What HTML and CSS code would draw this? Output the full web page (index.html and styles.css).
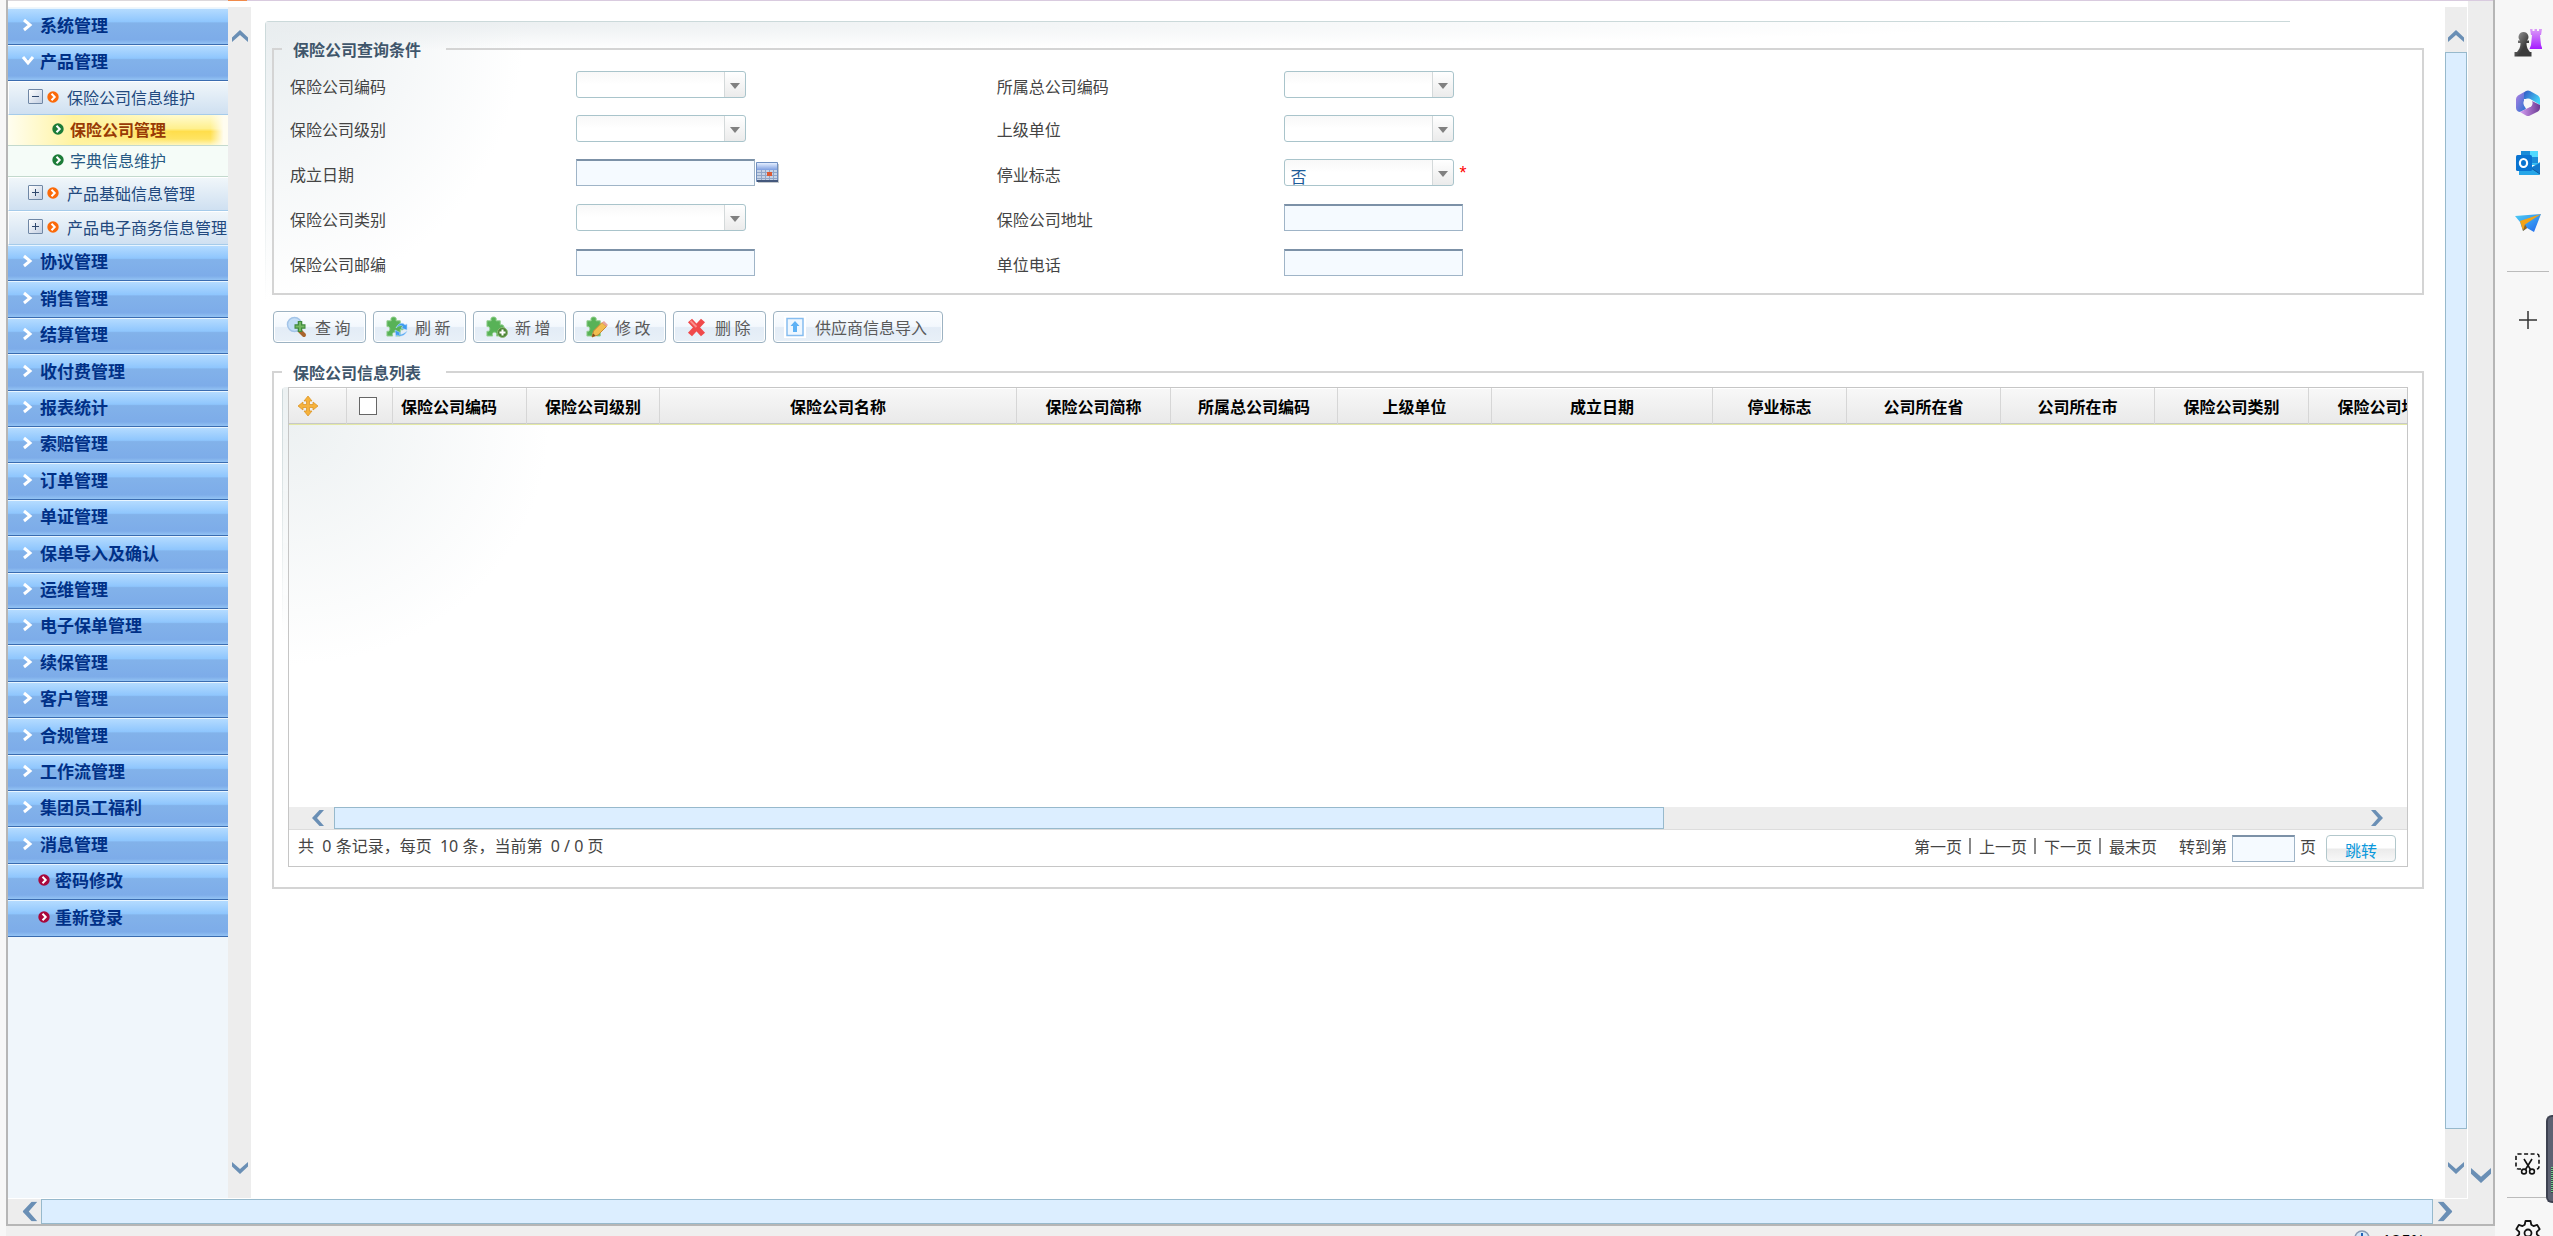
FILE: index.html
```html
<!DOCTYPE html>
<html lang="zh-CN">
<head>
<meta charset="utf-8">
<title>保险公司管理</title>
<link rel="stylesheet" href="styles.css">
</head>
<body>
<svg class="defs" aria-hidden="true">
  <symbol id="chev" viewBox="0 0 16 12"><path d="M0 12V7.500L8 0l8 7.500V12L8 5z" fill="#6a8fb5"/></symbol>
  <symbol id="dot" viewBox="0 0 12 12"><circle cx="6" cy="6" r="5.700" fill="currentColor"/><path d="M4.500 2.800L7.700 6 4.500 9.200" fill="none" stroke="#fff" stroke-width="2"/></symbol>
  <symbol id="arrow" viewBox="0 0 12 14"><path d="M2 2l6 5-6 5" fill="none" stroke="#fff" stroke-width="3"/></symbol>
  <symbol id="puzzle" viewBox="0 0 20 22"><path d="M1 5h4.500C4.500 2 6 1 8 1s3.500 1 2.500 4H15v4.500c2-1 4 0 4 2.500s-2 3-4 2V21h-4c.8-3-.5-4-2-4s-3 1-2 4H1v-5c2 .6 3-.6 3-2.500S3 11 1 11z" fill="#58b257" stroke="#8fcf8c"/></symbol>
  <symbol id="tri" viewBox="0 0 10 6"><path d="M0 0h10L5 6z" fill="#808080"/></symbol>
</svg>
<div class="browser">
  <div class="frame-wrap">
    <div class="frame">
      <div class="topline"><i></i><b></b><u></u></div>
      <div class="panes">
        <nav class="nav">
          <ul class="menu">
            <li class="top open"><a href="#"><svg><use href="#arrow"/></svg>系统管理</a></li>
            <li class="top down"><a href="#"><svg><use href="#arrow"/></svg>产品管理</a></li>
            <li class="sub"><a href="#"><span class="box minus"></span><svg><use href="#dot"/></svg>保险公司信息维护</a></li>
            <li class="leaf current"><a href="#"><svg><use href="#dot"/></svg>保险公司管理</a></li>
            <li class="leaf"><a href="#"><svg><use href="#dot"/></svg>字典信息维护</a></li>
            <li class="sub"><a href="#"><span class="box plus"></span><svg><use href="#dot"/></svg>产品基础信息管理</a></li>
            <li class="sub"><a href="#"><span class="box plus"></span><svg><use href="#dot"/></svg>产品电子商务信息管理</a></li>
          </ul>
          <ul class="menu rest">
            <li class="top"><a href="#"><svg><use href="#arrow"/></svg>协议管理</a></li>
            <li class="top"><a href="#"><svg><use href="#arrow"/></svg>销售管理</a></li>
            <li class="top"><a href="#"><svg><use href="#arrow"/></svg>结算管理</a></li>
            <li class="top"><a href="#"><svg><use href="#arrow"/></svg>收付费管理</a></li>
            <li class="top"><a href="#"><svg><use href="#arrow"/></svg>报表统计</a></li>
            <li class="top"><a href="#"><svg><use href="#arrow"/></svg>索赔管理</a></li>
            <li class="top"><a href="#"><svg><use href="#arrow"/></svg>订单管理</a></li>
            <li class="top"><a href="#"><svg><use href="#arrow"/></svg>单证管理</a></li>
            <li class="top"><a href="#"><svg><use href="#arrow"/></svg>保单导入及确认</a></li>
            <li class="top"><a href="#"><svg><use href="#arrow"/></svg>运维管理</a></li>
            <li class="top"><a href="#"><svg><use href="#arrow"/></svg>电子保单管理</a></li>
            <li class="top"><a href="#"><svg><use href="#arrow"/></svg>续保管理</a></li>
            <li class="top"><a href="#"><svg><use href="#arrow"/></svg>客户管理</a></li>
            <li class="top"><a href="#"><svg><use href="#arrow"/></svg>合规管理</a></li>
            <li class="top"><a href="#"><svg><use href="#arrow"/></svg>工作流管理</a></li>
            <li class="top"><a href="#"><svg><use href="#arrow"/></svg>集团员工福利</a></li>
            <li class="top"><a href="#"><svg><use href="#arrow"/></svg>消息管理</a></li>
            <li class="top act"><a href="#"><svg><use href="#dot"/></svg>密码修改</a></li>
            <li class="top act"><a href="#"><svg><use href="#dot"/></svg>重新登录</a></li>
          </ul>
        </nav>
        <div class="vbar"><svg class="up"><use href="#chev"/></svg><span class="track"></span><svg class="dn"><use href="#chev"/></svg></div>
        <main class="content">
          <div class="panel">
            <form>
            <fieldset class="query">
              <legend>保险公司查询条件</legend>
              <div class="fields">
                <label for="f1">保险公司编码</label>
                <div><span class="combo"><select id="f1"><option></option></select><svg><use href="#tri"/></svg></span></div>
                <label for="f2">所属总公司编码</label>
                <div><span class="combo"><select id="f2"><option></option></select><svg><use href="#tri"/></svg></span></div>
                <label for="f3">保险公司级别</label>
                <div><span class="combo"><select id="f3"><option></option></select><svg><use href="#tri"/></svg></span></div>
                <label for="f4">上级单位</label>
                <div><span class="combo"><select id="f4"><option></option></select><svg><use href="#tri"/></svg></span></div>
                <label for="f5">成立日期</label>
                <div><input class="text" id="f5" type="text"><button type="button" class="cal" aria-label="选择日期"><svg viewBox="0 0 23 21"><defs><linearGradient id="cg" x2="0" y2="1"><stop offset="0" stop-color="#e4eeff"/><stop offset="1" stop-color="#7f9fe0"/></linearGradient></defs><path d="M2 2h21v19H2z" fill="#c4c8cc"/><path d="M.5.5h21v19H.5z" fill="#c6d3e6" stroke="#6f8fc0"/><path d="M1 1h20v7H1z" fill="url(#cg)"/><path d="M1 10.500h20M1 13.500h20M1 16.500h20M5.500 8v11M9.500 8v11M13.500 8v11M17.500 8v11" stroke="#92a6c6"/><path d="M11 10h5v4h-5z" fill="#dc5a32"/><path d="M1 19h21" stroke="#44587c" stroke-width="2"/></svg></button></div>
                <label for="f6">停业标志</label>
                <div><span class="combo"><select id="f6"><option>否</option></select><svg><use href="#tri"/></svg></span><span class="req">*</span></div>
                <label for="f7">保险公司类别</label>
                <div><span class="combo"><select id="f7"><option></option></select><svg><use href="#tri"/></svg></span></div>
                <label for="f8">保险公司地址</label>
                <div><input class="text" id="f8" type="text"></div>
                <label for="f9">保险公司邮编</label>
                <div><input class="text" id="f9" type="text"></div>
                <label for="f10">单位电话</label>
                <div><input class="text" id="f10" type="text"></div>
              </div>
            </fieldset>
            <div class="tools">
              <button type="button"><svg viewBox="0 0 22 22"><path d="M13 14l5 5" stroke="#a8642c" stroke-width="4" stroke-linecap="round"/><circle cx="8.500" cy="8.500" r="7" fill="#c5dff8" stroke="#a3c4e8" stroke-width="1.500"/><path d="M14 5v11M8.500 10.500h11" stroke="#3f8a3d" stroke-width="4.500"/><path d="M14 6v9M9.500 10.500h9" stroke="#74b862" stroke-width="2"/></svg>查 询</button>
              <button type="button"><svg viewBox="0 0 22 22"><use href="#puzzle" width="19" height="21"/><path d="M10 12c2-5 7-6 9-3l2-1v6l-6-2 2-1c-1-2-4-2-7 1zM21 15c-2 5-7 6-10 4l-1 2-1-7 6 3-2 1c2 1 5 0 8-3z" fill="#3d9bf0" stroke="#b5dafb" stroke-width=".6"/></svg>刷 新</button>
              <button type="button"><svg viewBox="0 0 22 22"><use href="#puzzle" width="19" height="21"/><circle cx="16.500" cy="16.500" r="5" fill="#4c8435" stroke="#8fba78"/><path d="M16.500 13.500v6M13.500 16.500h6" stroke="#fff" stroke-width="2"/></svg>新 增</button>
              <button type="button"><svg viewBox="0 0 22 22"><use href="#puzzle" width="19" height="21"/><path d="M6 21l1.500-6L16 6.500l4.500 4L12 19z" fill="#f2bd4f" stroke="#c88a35"/><path d="M16 6.500l2-1.500 4 4-1.500 1.500z" fill="#e9a39b"/><path d="M6 21l1-3.500 2.500 2z" fill="#7c4a1c"/></svg>修 改</button>
              <button type="button"><svg viewBox="0 0 22 22"><path d="M4 4.500l13 14M17 4.500L4 18.500" stroke="#f0494b" stroke-width="5.500"/><path d="M4.500 5l6 6" stroke="#fb8d8c" stroke-width="2"/></svg>删 除</button>
              <button type="button" class="wide"><svg viewBox="0 0 22 22"><path d="M0 0h22v22H0z" fill="#fff"/><path d="M3 2.500h16v17H3z" fill="#eef7ff" stroke="#86bdf0" stroke-width="1.500"/><path d="M11 5l4.500 5H13v6H9v-6H6.500z" fill="#5eb2f5"/></svg>供应商信息导入</button>
            </div>
            <fieldset class="list">
              <legend>保险公司信息列表</legend>
              <div class="grid">
                <div class="gridbox">
                  <div class="scroll">
                    <table>
                      <colgroup><col class="c58"><col class="c46"><col class="c134"><col class="c133"><col class="c357"><col class="c154"><col class="c167"><col class="c154"><col class="c221"><col class="c134"><col class="c154"><col class="c154"><col class="c154"><col class="c154"></colgroup>
                      <thead><tr>
                        <th class="move"><svg viewBox="0 0 20 20"><path d="M10 0l4 5h-2.500v3.500H15V6l5 4-5 4v-2.500h-3.500V15H14l-4 5-4-5h2.500v-3.500H5V14l-5-4 5-4v2.500h3.500V5H6z" fill="#f6b23c" stroke="#d98f1c" stroke-width=".7"/></svg></th>
                        <th><input type="checkbox" aria-label="全选"></th>
                        <th class="code">保险公司编码</th><th>保险公司级别</th><th>保险公司名称</th><th>保险公司简称</th><th>所属总公司编码</th><th>上级单位</th><th>成立日期</th><th>停业标志</th><th>公司所在省</th><th>公司所在市</th><th>保险公司类别</th><th>保险公司地址</th>
                      </tr></thead>
                    </table>
                  </div>
                  <div class="gridbody"></div>
                  <div class="hbar inner"><svg class="lf"><use href="#chev"/></svg><span class="thumb"></span><svg class="rt"><use href="#chev"/></svg></div>
                  <div class="foot">
                    <span class="count">共&nbsp; 0 条记录，每页&nbsp; 10 条，当前第&nbsp; 0 / 0 页</span>
                    <span class="pager"><a href="#">第一页</a><i></i><a href="#">上一页</a><i></i><a href="#">下一页</a><i></i><a href="#">最末页</a></span>
                    <label for="pg">转到第</label><input class="text" id="pg" type="text"><span class="unit">页</span>
                    <button type="button" class="go">跳转</button>
                  </div>
                </div>
              </div>
            </fieldset>
            </form>
          </div>
        </main>
        <div class="vbar main"><svg class="up"><use href="#chev"/></svg><span class="track thumb"></span><svg class="dn"><use href="#chev"/></svg></div>
        <div class="vbar outer"><span class="track"></span><svg class="dn"><use href="#chev"/></svg></div>
      </div>
      <div class="hbar page"><svg class="lf"><use href="#chev"/></svg><span class="thumb"></span><svg class="rt"><use href="#chev"/></svg></div>
    </div>
    <footer class="status"><svg viewBox="0 0 16 16"><circle cx="8" cy="8" r="7" fill="#d3e6f7" stroke="#8a9cb5" stroke-width="1.500"/><path d="M8 3v10M3 8h10" stroke="#1f62b5" stroke-width="2"/></svg><span>125%</span></footer>
  </div>
  <aside class="edge">
    <a href="#" aria-label="游戏"><svg width="28" height="28" viewBox="0 0 28 28"><defs><linearGradient id="rk" x2="0" y2="1"><stop offset="0" stop-color="#dc9cf8"/><stop offset="1" stop-color="#a51bff"/></linearGradient><linearGradient id="pw" x2="1" y2="1"><stop offset="0" stop-color="#a5a5a5"/><stop offset=".6" stop-color="#3c3c3c"/></linearGradient></defs><path d="M16 0h2.500v2h2V0h2.500v2h2V0H28l-1 6h-1l1 10 1.500 4h-13L17 16l1-10h-1z" fill="url(#rk)"/><path d="M9.500 3a5 5 0 0 1 3.500 8.500h2v2.500h-2.500c0 5 2 7 3.500 9h1.500v4.500H.500V23H3c1.500-2 3.500-4 3.500-9H4v-2.500h2A5 5 0 0 1 9.500 3z" fill="url(#pw)"/></svg></a>
    <a href="#" aria-label="Microsoft 365"><svg width="24" height="26" viewBox="0 0 24 26"><defs><linearGradient id="ma" x2="1" y2="1"><stop offset="0" stop-color="#b57fe4"/><stop offset="1" stop-color="#2572d0"/></linearGradient><linearGradient id="mb" x2="1" y2=".6"><stop offset="0" stop-color="#3156c4"/><stop offset="1" stop-color="#43d3f8"/></linearGradient><linearGradient id="mc" x2="1"><stop offset="0" stop-color="#d49df2"/><stop offset="1" stop-color="#6b3a93"/></linearGradient></defs><path d="M10 1L2 5.500Q0 7 0 9v9q0 2 2 3.500l2 .5 6-3-2-4V5z" fill="url(#ma)"/><path d="M8 9V3l2-2q2-1 4 0l8 4.500Q24 7 24 9v6l-8-5-4-1z" fill="url(#mb)"/><path d="M16 11l8 4v3q0 2-2 3.500L14 25.500q-2 1-4 0L4 22l8-4 4-3z" fill="url(#mc)"/><circle cx="12" cy="13" r="4.600" fill="#f7f7f7"/></svg></a>
    <a href="#" aria-label="Outlook"><svg width="24" height="24" viewBox="0 0 24 24"><path d="M5 0h17v14H5z" fill="#38bdf4"/><path d="M5 0h9v6H5zM14 6h8v6h-8z" fill="#1a8cd8"/><path d="M14 0h8v6h-8z" fill="#50d9ff"/><path d="M5 5h10v7H5z" fill="#0a5ea8"/><path d="M24 11v12q0 1-1 1H3V14l13 2z" fill="#27a6e8"/><path d="M24 12v11l-9-6z" fill="#1278cc"/><path d="M24 23L12 15" stroke="#0e5b9e"/><rect x="0" y="4" width="16" height="16" rx="1.500" fill="#0a74d1"/><ellipse cx="7.500" cy="12" rx="3.600" ry="4" fill="none" stroke="#fff" stroke-width="2.200"/></svg></a>
    <a href="#" aria-label="Drop"><svg width="26" height="20" viewBox="0 0 26 20"><defs><linearGradient id="pl" x2="1" y2="1"><stop offset="0" stop-color="#4fd0f4"/><stop offset="1" stop-color="#1f64ee"/></linearGradient></defs><path d="M0 3L26 1l-7 18-7-4-4 3L5 9z" fill="url(#pl)"/><path d="M5 8L26 1 10 11.500 8 18z" fill="#f2a316"/><path d="M10 11.500l2 3.500-4 3z" fill="#9a6210"/></svg></a>
    <hr>
    <a href="#" class="add" aria-label="添加"><svg width="18" height="18" viewBox="0 0 18 18"><path d="M9 0v18M0 9h18" stroke="#333" stroke-width="1.500"/></svg></a>
    <span class="grow"></span>
    <a href="#" class="snip" aria-label="屏幕截图"><svg width="26" height="22" viewBox="0 0 26 22" fill="none" stroke="#111" stroke-width="1.600"><path d="M6 16H3.500Q1 16 1 13.500V3.500Q1 1 3.500 1h18Q24 1 24 3.500v10q0 2.500-2.500 2.500H20" stroke-dasharray="4 2.500"/><path d="M9 6l6.500 10.500M17 6l-6.500 10.500"/><circle cx="9" cy="18.500" r="2.400"/><circle cx="17" cy="18.500" r="2.400"/></svg></a>
    <hr>
    <a href="#" class="gear" aria-label="设置"><svg width="26" height="26" viewBox="0 0 26 26" fill="none" stroke="#111" stroke-width="1.800"><path d="M10.500 1h5l.8 3.800 2.200 1.300 3.700-1.200 2.500 4.300-2.900 2.600v2.500l2.900 2.600-2.500 4.300-3.700-1.200-2.200 1.300-.8 3.800h-5l-.8-3.800-2.200-1.300-3.700 1.200-2.500-4.300 2.900-2.600v-2.500L1.300 9.200l2.500-4.300 3.700 1.200 2.200-1.300z" stroke-linejoin="round"/><circle cx="13" cy="13" r="3.500"/></svg></a>
    <div class="meter"><i></i></div>
  </aside>
</div>
</body>
</html>
```
FILE: styles.css
```css
* { box-sizing: border-box; }
html, body { height: 100%; }
body {
  margin: 0;
  overflow: hidden;
  background: #f7f7f7;
  color: #444;
  font: 16px/24px "Noto Sans CJK SC", sans-serif;
}
a { color: inherit; text-decoration: none; }
button, input, select { font: inherit; margin: 0; }
.defs { position: absolute; width: 0; height: 0; }

.browser { display: flex; height: 100vh; }
.frame-wrap { flex: 1; min-width: 0; display: flex; flex-direction: column; padding-left: 6px; }
.frame {
  flex: 1;
  min-height: 0;
  display: flex;
  flex-direction: column;
  background: #fff;
  border: 2px solid #b6b6b6;
  border-top: 0;
}
.topline { display: flex; flex: none; height: 7px; }
.topline i { width: 220px; height: 1px; background: #dcd8dc; }
.topline b { width: 19px; height: 1px; background: #f08a4a; }
.topline u { flex: 1; height: 1px; background: #d9cbdf; }
.panes { flex: 1; min-height: 0; display: flex; }

/* navigation */
.nav { width: 220px; flex: none; background: #f0f6fb; overflow: hidden; padding-top: 1px; margin-bottom: 1px; }
.menu { list-style: none; margin: 0; padding: 0; white-space: nowrap; }
.menu a { display: flex; align-items: center; height: 100%; }
.menu svg { flex: none; width: 12px; height: 12px; }
.top {
  height: 36px;
  border-top: 1px solid #e8f5ff;
  border-bottom: 1px solid #3a6cb0;
  background: linear-gradient(#b4dbff, #8fc6fd 36%, #82b2ea 40%, #7dace9 88%, #93c3f4);
  color: #003087;
  font-size: 17px;
  font-weight: 700;
}
.menu > .open { height: 37px; }
.rest .top:nth-child(5n+2), .rest .top:nth-child(5n+4) { height: 37px; }
.top a { padding: 0 0 4px 14px; }
.top svg { height: 14px; margin-right: 6px; }
.down svg { transform: rotate(90deg); }
.act a { padding-left: 30px; }
.act svg { height: 12px; margin-right: 5px; color: #a8083c; }
.sub {
  height: 34px;
  border: 1px solid #fff;
  border-right: 0;
  border-bottom-color: #a5cbea;
  background: linear-gradient(#f0f6fa, #cfe0f1);
  color: #22497e;
}
.sub a { padding: 0 0 3px 19px; }
.sub svg { margin: 0 8px 0 4px; color: #fb6a09; }
.box {
  flex: none;
  width: 15px;
  height: 15px;
  border: 1px solid #6f87a5;
  border-radius: 1px;
  background: linear-gradient(#31486d, #31486d) center / 7px 1px no-repeat, linear-gradient(135deg, #fff, #c3cfe2);
}
.box.plus { background: linear-gradient(#31486d, #31486d) center / 7px 1px no-repeat, linear-gradient(#31486d, #31486d) center / 1px 7px no-repeat, linear-gradient(135deg, #fff, #c3cfe2); }
.leaf { height: 31px; border-bottom: 1px solid #c3d9cd; background: #f5fcf8; color: #285a84; }
.leaf a { padding: 0 0 3px 44px; }
.leaf svg { margin-right: 6px; color: #1c7c38; }
.current {
  color: #983a05;
  font-weight: 700;
  background:
    linear-gradient(90deg, transparent 92%, #fffdf0 98%),
    linear-gradient(90deg, #fffef0, #fff3a0 30%, transparent 75%),
    linear-gradient(#fffbd0, #fff08e 45%, #ffde4c 55%, #ffe462 80%, #fff6c0);
}

/* scroll bars */
.vbar { flex: none; width: 23px; display: flex; flex-direction: column; align-items: center; background: #ededed; padding: 23px 0 24px; margin-bottom: 1px; }
.vbar svg { width: 16px; height: 12px; flex: none; }
.vbar .dn { transform: rotate(180deg); }
.vbar .track { flex: 1; align-self: stretch; }
.vbar.main { width: 22px; margin-right: 1px; }
.vbar.main .thumb { margin: 10px 0 33px; }
.thumb { background: #dceeff; border: 1px solid #97b9cc; }
.vbar.outer { width: 25px; margin: -6px 0 0; padding-bottom: 16px; }
.vbar.outer .dn { width: 20px; height: 15px; }
.hbar { display: flex; align-items: center; flex: none; background: #ededed; }
.hbar svg { flex: none; }
.hbar .lf { transform: rotate(-90deg); }
.hbar .rt { transform: rotate(90deg); }
.hbar .thumb { align-self: stretch; }
.hbar.page { height: 25px; }
.hbar.page svg { width: 20px; height: 15px; }
.hbar.page .lf { margin: 0 1px 0 12px; }
.hbar.page .thumb { flex: 1; }
.hbar.page .rt { margin: 0 38px 0 2px; }
.hbar.inner { height: 23px; border-bottom: 1px solid #ddd; }
.hbar.inner svg { width: 16px; height: 12px; }
.hbar.inner .lf { margin: 0 8px 0 21px; }
.hbar.inner .thumb { width: 62.8%; }
.hbar.inner .rt { margin: 0 22px 0 auto; }

/* content */
.content { flex: 1; min-width: 0; overflow: hidden; padding: 14px 21px 0 14px; }
.panel {
  padding: 16px 0 0 7px;
  border-top-left-radius: 4px;
  background:
    linear-gradient(#cbd9da, #cbd9da) 0 0 / 2025px 1px no-repeat,
    linear-gradient(#cbd9da, transparent) 0 0 / 1px 280px no-repeat,
    radial-gradient(ellipse 1800px 30px at 0 0, #e9edef, transparent) no-repeat,
    radial-gradient(ellipse 260px 280px at 0 0, #e9eef0, #fff) no-repeat;
}
fieldset { margin: 0; min-width: 0; border: 2px solid #d4d4d4; padding: 0 8px 7px; }
legend { padding: 0 25px 0 11px; color: #40566b; font-weight: 700; }
.fields {
  display: grid;
  grid-template-columns: 286fr 421fr 287fr 1131fr;
  grid-template-rows: 43px 44px 45px 45px 45px;
  align-items: center;
  padding: 3px 0 0 8px;
  height: 225px;
}
.fields > div { display: flex; align-items: center; padding-bottom: 2px; }
.combo { position: relative; display: flex; width: 170px; height: 27px; }
.combo select {
  appearance: none;
  width: 100%;
  padding: 6px 24px 0 6px;
  border: 1px solid #a9c4cb;
  border-radius: 3px;
  color: #1f5c99;
  line-height: 20px;
  background: linear-gradient(#d4d9da, #d4d9da) right 20px top 0 / 1px 100% no-repeat, linear-gradient(#fff, #ebebeb) right / 20px 100% no-repeat, linear-gradient(#f8f8f8, #fff 50%);
}
.combo svg { position: absolute; right: 6px; top: 12px; width: 10px; height: 6px; pointer-events: none; }
.text { width: 179px; height: 27px; border: 1px solid #9fb4c7; border-top: 2px solid #7c91a7; background: #f5faff; padding: 0 4px; }
.cal { width: 23px; height: 21px; margin-left: 1px; padding: 0; border: 0; background: none; }
.cal svg { display: block; width: 23px; height: 21px; }
.req { margin-left: 6px; color: #f00; font-family: "Liberation Sans", sans-serif; font-size: 18px; line-height: 18px; }

.tools { display: flex; gap: 7px; padding: 16px 0 17px 1px; }
.tools button {
  display: flex;
  align-items: center;
  width: 93px;
  height: 32px;
  padding: 0 0 0 12px;
  border: 1px solid #9cb2c2;
  border-radius: 4px;
  background: linear-gradient(#fbfdff, #f3f8fd 48%, #e3ecf6 52%, #e8f0f8);
  box-shadow: inset 0 0 0 1px #fff;
  color: #5a5a5a;
  white-space: nowrap;
}
.tools svg { flex: none; width: 22px; height: 22px; margin-right: 7px; }
.tools .wide { width: 170px; padding-left: 10px; }
.tools .wide svg { margin-right: 9px; }

.list { padding: 0 14px 20px 8px; }
.grid {
  margin-top: 3px;
  padding-left: 6px;
  border-top-left-radius: 4px;
  background: linear-gradient(#cdd8da, transparent) 0 0 / 1px 240px no-repeat, linear-gradient(#ecf1f2, transparent 260px) no-repeat;
}
.gridbox { border: 1px solid #c6c6c6; }
.scroll { overflow: hidden; }
table { table-layout: fixed; width: 2174px; border-collapse: separate; border-spacing: 0; }
.c46 { width: 46px; } .c58 { width: 58px; } .c133 { width: 133px; } .c134 { width: 134px; }
.c154 { width: 154px; } .c167 { width: 167px; } .c221 { width: 221px; } .c357 { width: 357px; }
th {
  height: 37px;
  padding: 0;
  border-right: 1px solid #d6d6d6;
  border-bottom: 1px solid #e3e9a5;
  box-shadow: inset 0 -1px 0 #c8c8c8, inset 0 1px 0 #fff;
  background: linear-gradient(#f8f8f8, #e9e9e9);
  color: #000;
  text-align: center;
}
th.code { padding-left: 8px; text-align: left; }
th svg { display: block; width: 20px; height: 20px; margin-left: 9px; }
th input { display: block; width: 18px; height: 18px; margin: 0 0 0 12px; appearance: none; border: 1px solid #666; background: #fff; }
.gridbody { height: 382px; background: radial-gradient(ellipse 260px 240px at 0 0, #edf1f2, #fff) no-repeat, #fff; }
.foot { display: flex; align-items: center; height: 36px; padding: 0 11px 0 9px; white-space: nowrap; background: #fff; }
.foot .count, .pager, .foot label, .unit { padding-bottom: 4px; }
.count { margin-right: auto; font-family: "Noto Sans", "Noto Sans CJK SC", sans-serif; }
.pager { display: flex; align-items: center; margin-right: 22px; }
.pager i { width: 2px; height: 16px; margin: 0 8px 0 7px; background: #888; }
.foot .text { width: 63px; margin: 0 5px; }
.go {
  width: 70px;
  height: 27px;
  margin-left: 10px;
  padding: 3px 0 0;
  border: 1px solid #b3c8cc;
  border-radius: 4px;
  background: linear-gradient(#fff, #fff 48%, #ebebeb 52%, #f8f8f8);
  color: #0a98dc;
  line-height: 20px;
}

/* browser chrome */
.status { flex: none; height: 10px; overflow: hidden; display: flex; justify-content: flex-end; align-items: flex-start; background: #efefef; padding-right: 70px; color: #000; font-family: "Noto Sans", sans-serif; font-size: 17px; }
.status svg { flex: none; width: 16px; height: 16px; margin: 4px 12px 0 0; }
.status span { margin-top: 3px; }
.edge { position: relative; flex: none; width: 58px; display: flex; flex-direction: column; align-items: center; padding: 29px 0 0 8px; overflow: hidden; }
.edge a { display: flex; align-items: center; justify-content: center; flex: none; height: 28px; margin-bottom: 32px; }
.edge hr { flex: none; width: 42px; height: 1px; margin: 2px 0 39px; border: 0; background: #bbb; }
.edge .add { height: 18px; margin: 0; }
.grow { flex: 1; }
.edge .snip { height: 22px; margin-bottom: 22px; }
.edge .snip + hr { margin: 0 0 22px; }
.edge .gear { height: 16px; margin: 0; align-items: flex-start; overflow: hidden; }
.meter { position: absolute; right: 0; bottom: 33px; width: 7px; height: 88px; border: 2px solid #3d4150; border-right: 0; border-radius: 6px 0 0 6px; background: #5d6172; display: flex; justify-content: flex-end; align-items: flex-end; padding-bottom: 8px; }
.meter i { width: 2px; height: 26px; background: repeating-linear-gradient(#6fd38a 0 1px, #3d4150 1px 2px); }
```
